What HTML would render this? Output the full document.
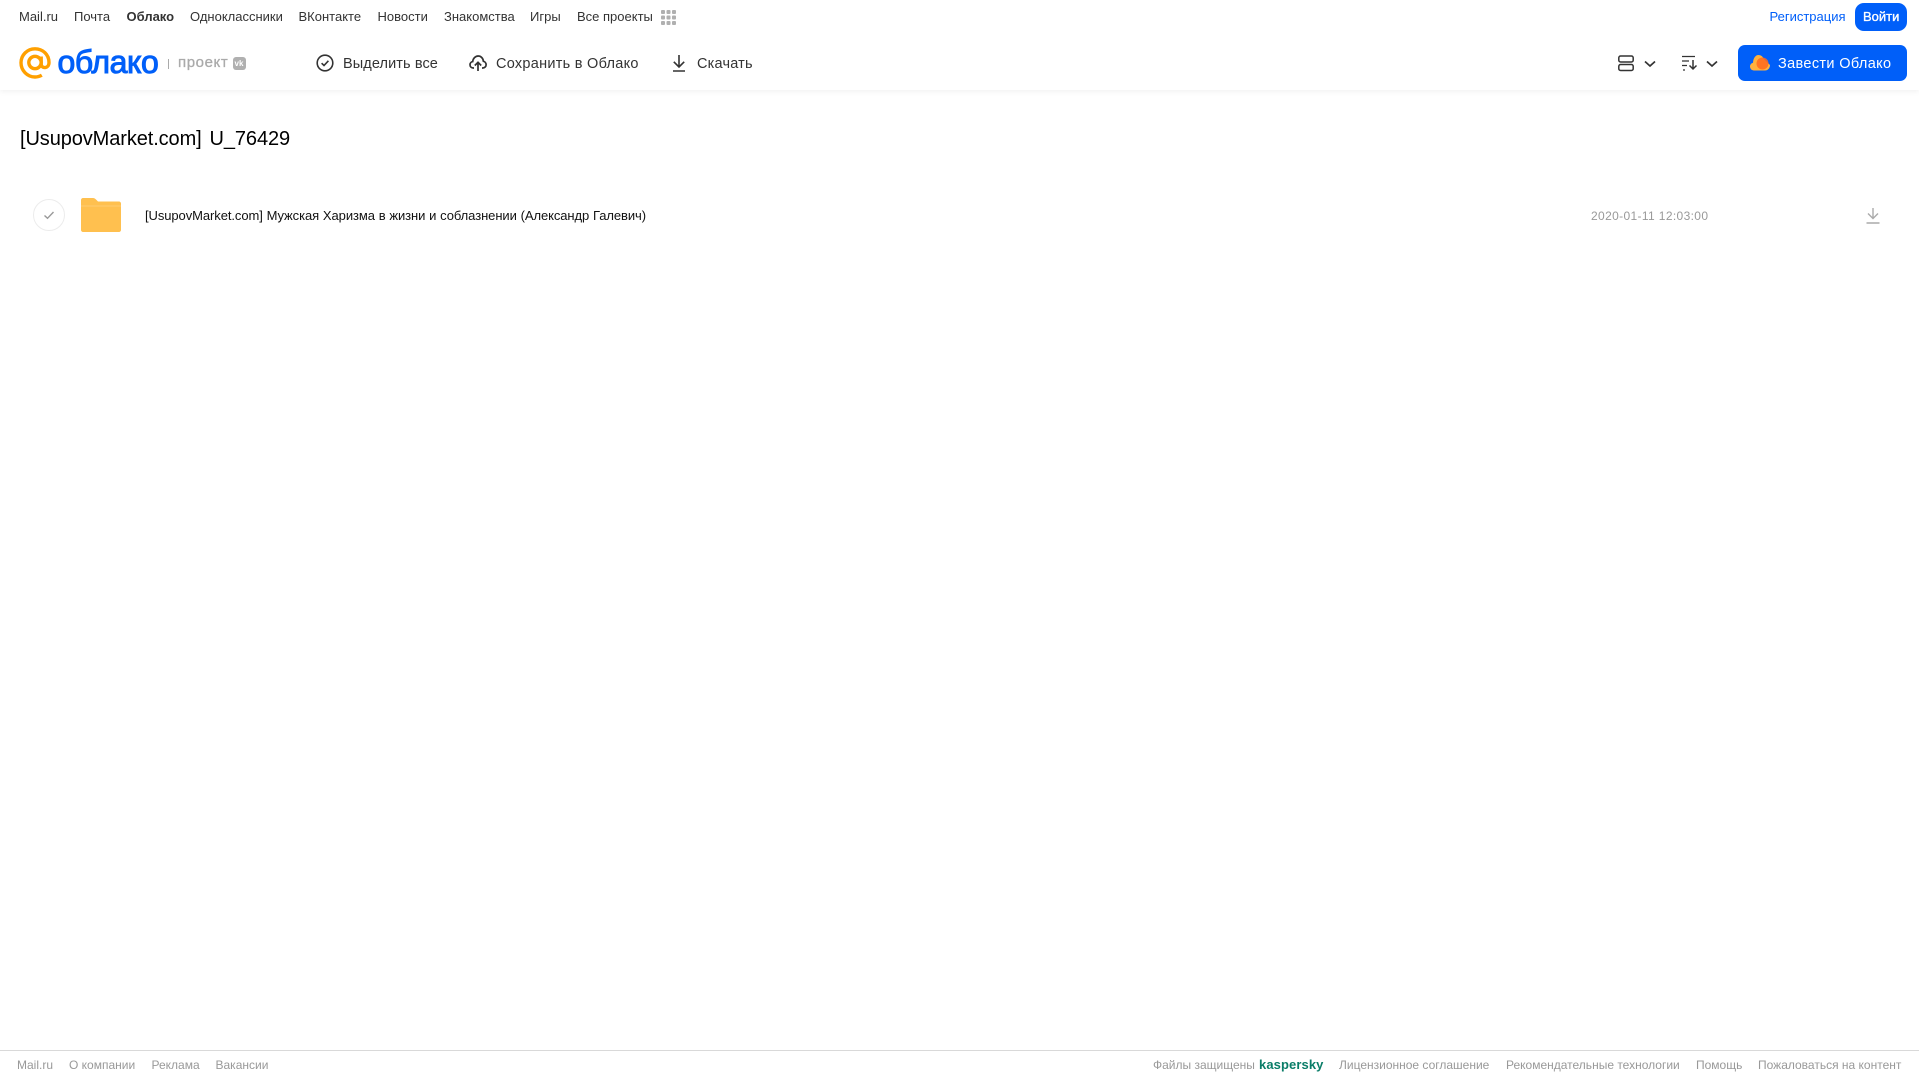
<!DOCTYPE html>
<html lang="ru"><head><meta charset="utf-8"><title>Облако</title>
<style>
html,body{margin:0;padding:0;background:#fff}
body{width:1919px;height:1079px;position:relative;overflow:hidden;font-family:"Liberation Sans",Arial,sans-serif}
.t{position:absolute;white-space:nowrap;line-height:20px}
.n{top:7px;font-size:13px;color:#333}
.b{top:53.5px;font-size:14.5px;color:#333;letter-spacing:.2px}
.f{top:1055px;font-size:12px;color:#999}
svg{position:absolute;overflow:visible}
#hd{position:absolute;left:0;top:0;width:1919px;height:90px;background:#fff;box-shadow:0 1px 6px rgba(0,0,0,.07)}
</style></head><body>
<div id="hd"></div>
<span class="t n" style="left:19px">Mail.ru</span>
<span class="t n" style="left:74px">Почта</span>
<span class="t n" style="left:126.5px;font-weight:bold">Облако</span>
<span class="t n" style="left:190px">Одноклассники</span>
<span class="t n" style="left:298.5px">ВКонтакте</span>
<span class="t n" style="left:377.5px">Новости</span>
<span class="t n" style="left:444px">Знакомства</span>
<span class="t n" style="left:530px">Игры</span>
<span class="t n" style="left:577px">Все проекты</span>
<svg style="left:661px;top:10px" width="15" height="15" fill="#b0b0b0"><rect width="4" height="4" rx="1"/><rect x="5.500" width="4" height="4" rx="1"/><rect x="11" width="4" height="4" rx="1"/><rect y="5.500" width="4" height="4" rx="1"/><rect x="5.500" y="5.500" width="4" height="4" rx="1"/><rect x="11" y="5.500" width="4" height="4" rx="1"/><rect y="11" width="4" height="4" rx="1"/><rect x="5.500" y="11" width="4" height="4" rx="1"/><rect x="11" y="11" width="4" height="4" rx="1"/></svg>
<span class="t n" style="left:1769.5px;color:#005ff9">Регистрация</span>
<div style="position:absolute;left:1855px;top:3px;width:52px;height:28px;background:#005ff9;border-radius:9px"></div>
<span class="t n" style="left:1863px;color:#fff;top:7px;-webkit-text-stroke:.35px #fff">Войти</span>

<svg style="left:19px;top:47px" width="32" height="32" viewBox="0 0 32 32" fill="none" stroke="#ffa000" stroke-width="3.400"><circle cx="16" cy="15.500" r="6.200"/><path d="M22.200 9.500v7.500c0 5 7.800 5 7.800-1.500C30 7.500 23.700 1.800 16 1.800 8.300 1.800 2 8 2 15.800 2 23.600 8.300 30 16 30c2.600 0 4.800-.6 6.800-1.800"/></svg>
<span class="t" style="left:57.5px;top:42px;line-height:40px;font-size:32px;color:#005ff9;-webkit-text-stroke:1px #005ff9;letter-spacing:-.4px">облако</span>
<div style="position:absolute;left:168px;top:59px;width:1px;height:10px;background:#aaa"></div>
<span class="t" style="left:178px;top:53px;font-size:15px;color:#aaa;letter-spacing:.6px;-webkit-text-stroke:.3px #aaa">проект</span>
<div style="position:absolute;left:232.5px;top:57px;width:13px;height:13px;background:#b0b0b0;border-radius:3px;color:#fff;font-size:8px;font-weight:bold;line-height:13px;text-align:center">vk</div>

<svg style="left:316px;top:54px" width="18" height="18" viewBox="0 0 18 18" fill="none" stroke="#333" stroke-width="1.600"><circle cx="9" cy="9" r="7.800"/><path d="M5.600 9.200l2.400 2.300 4.400-4.700"/></svg>
<span class="t b" style="left:343px;letter-spacing:.1px">Выделить все</span>
<svg style="left:469px;top:54px" width="18" height="18" viewBox="0 0 18 18" fill="none" stroke="#333" stroke-width="1.700"><path d="M5 14H4.300C2.300 14 1 12.500 1 10.800 1 9.200 2.100 7.900 3.700 7.600 4 4.500 6.300 2 9.200 2c2.700 0 4.900 2.200 5.200 5.300 1.600.3 2.700 1.700 2.700 3.400 0 1.800-1.400 3.300-3.300 3.300H13"/><path d="M9 17V8.500M5.800 11.500L9 8.300l3.200 3.200"/></svg>
<span class="t b" style="left:496px;letter-spacing:.27px">Сохранить в Облако</span>
<svg style="left:671px;top:54px" width="16" height="18" viewBox="0 0 16 18" fill="none" stroke="#333" stroke-width="1.600"><path d="M8 1v11.500M2.800 7.800L8 13l5.200-5.200M2 17h12"/></svg>
<span class="t b" style="left:697px">Скачать</span>

<svg style="left:1618px;top:55px" width="16" height="17" viewBox="0 0 16 17" fill="none" stroke="#333" stroke-width="1.500"><rect x=".8" y="1" width="14.400" height="6" rx="1.800"/><rect x=".8" y="9.500" width="14.400" height="6" rx="1.800"/></svg>
<svg style="left:1644px;top:60px" width="12" height="8" viewBox="0 0 12 8" fill="none" stroke="#333" stroke-width="1.700"><path d="M1 1.500l5 4.500 5-4.500"/></svg>
<svg style="left:1681px;top:55px" width="17" height="16" viewBox="0 0 17 16" fill="none" stroke="#333" stroke-width="1.300"><path d="M1 1.500h13M1 6h7M1 10.500h5M2 15h2"/><path stroke-width="1.500" d="M12 5v9M8.500 10.500L12 14l3.500-3.500"/></svg>
<svg style="left:1706px;top:60px" width="12" height="8" viewBox="0 0 12 8" fill="none" stroke="#333" stroke-width="1.700"><path d="M1 1.500l5 4.500 5-4.500"/></svg>

<div style="position:absolute;left:1738px;top:45px;width:169px;height:36px;background:#005ff9;border-radius:7px"></div>
<svg style="left:1750px;top:54px" width="20" height="17" viewBox="0 0 20 17"><path fill="#ffb13d" d="M4 16.500C1.800 16.500 0 14.700 0 12.500c0-1.900 1.300-3.400 3-3.800C3.300 4 5.500 1 8.500 1c2.400 0 4.300 1.500 5 3.600L20 11c0 3-2 5.500-5 5.500z"/><circle cx="12.500" cy="9.500" r="6" fill="#ff6a1f" opacity=".85"/></svg>
<span class="t b" style="left:1778px;color:#fff;letter-spacing:.35px">Завести Облако</span>

<span class="t" style="left:20px;top:125.5px;line-height:26px;font-size:20px;color:#000;word-spacing:2.500px;letter-spacing:-.1px">[UsupovMarket.com] U_76429</span>

<div style="position:absolute;left:33px;top:199px;width:30px;height:30px;border:1px solid #ececec;border-radius:50%"></div>
<svg style="left:43px;top:210px" width="12" height="10" viewBox="0 0 12 10" fill="none" stroke="#999" stroke-width="1.400"><path d="M1.500 5.500l3 2.800 6-6.300"/></svg>
<svg style="left:81px;top:198px" width="40" height="34" viewBox="0 0 40 34"><path fill="#ffc04f" d="M2 0h10c1.200 0 2 .5 3 1.500L17 3.500h21c1.100 0 2 .9 2 2V8H0V2C0 .9.900 0 2 0z"/><path fill="#ffc04f" d="M0 7.500h40V32c0 1.100-.9 2-2 2H2c-1.100 0-2-.9-2-2z"/><rect y="7.500" width="40" height="1" fill="#ffcd70"/></svg>
<span class="t" style="left:145px;top:205.5px;font-size:13px;color:#111;letter-spacing:-.08px;word-spacing:.3px">[UsupovMarket.com] Мужская Харизма в жизни и соблазнении (Александр Галевич)</span>
<span class="t" style="left:1591px;top:205.5px;font-size:12px;color:#999;letter-spacing:.36px">2020-01-11 12:03:00</span>
<svg style="left:1866px;top:207px" width="14" height="17" viewBox="0 0 14 17" fill="none" stroke="#aaa" stroke-width="1.400"><path d="M7 1v10M2 6.500L7 11.500l5-5M.5 16h13"/></svg>

<div style="position:absolute;left:0;top:1050px;width:1919px;height:1px;background:#d9d9d9"></div>
<span class="t f" style="left:17px">Mail.ru</span>
<span class="t f" style="left:69px">О компании</span>
<span class="t f" style="left:151.5px">Реклама</span>
<span class="t f" style="left:215.5px">Вакансии</span>
<span class="t f" style="left:1153px">Файлы защищены</span>
<span class="t f" style="left:1259px;color:#0a7d68;font-weight:bold;font-size:13px;letter-spacing:.1px">kaspersky</span>
<span class="t f" style="left:1339px">Лицензионное соглашение</span>
<span class="t f" style="left:1506px">Рекомендательные технологии</span>
<span class="t f" style="left:1696px">Помощь</span>
<span class="t f" style="left:1758px">Пожаловаться на контент</span>
</body></html>
